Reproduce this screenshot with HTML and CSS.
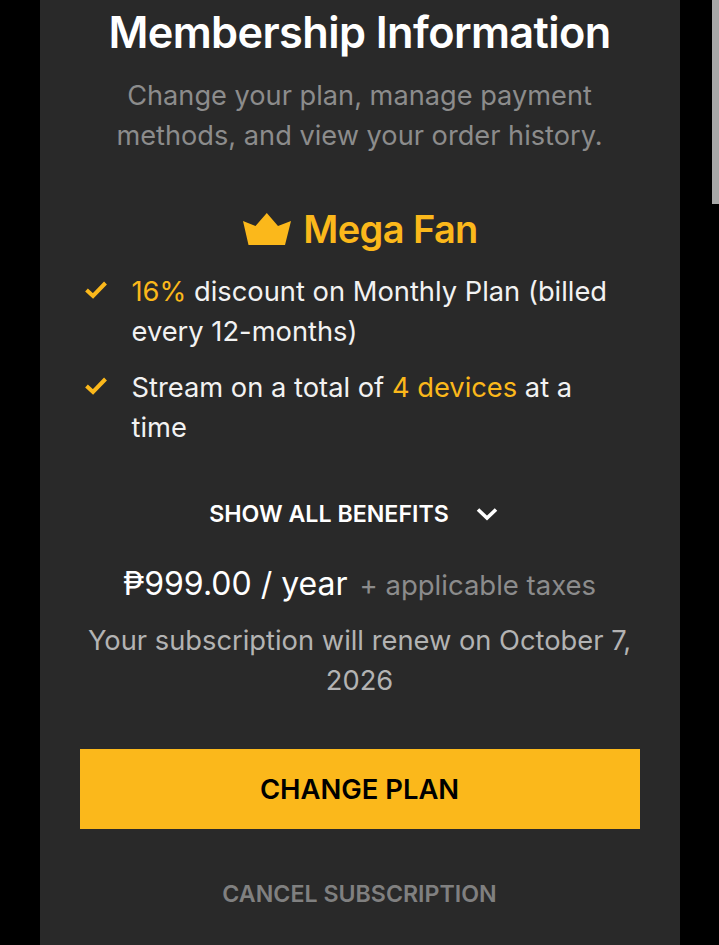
FILE: index.html
```html
<!DOCTYPE html>
<html lang="en">
<head>
  <meta charset="UTF-8">
  <meta name="viewport" content="width=device-width, initial-scale=1.0">
  <title>Membership Information</title>
  <link rel="stylesheet" href="styles.css">
</head>
<body>

  <div class="scroll-thumb"></div>

  <div class="container">
    <h1>Membership Information</h1>
    <p class="intro">Change your plan, manage payment methods, and view your order history.</p>

    <!-- Plan name -->
    <div class="plan-name">
      <svg class="crown" viewBox="0 0 48 32" aria-hidden="true">
        <path d="M23.800 0 L35 13 L48 8 L42 32 L5.500 32 L0 8 L12.500 13 Z" fill="#fbb81b"/>
      </svg>
      <span>Mega Fan</span>
    </div>

    <!-- Benefits -->
    <ul class="benefits">
      <li>
        <svg class="check" viewBox="0 0 22 18" aria-hidden="true"><path d="M1.500 9 L8 15 L20.500 2" fill="none" stroke="#fbb81b" stroke-width="4"/></svg>
        <span><em>16%</em> discount on Monthly Plan (billed every 12-months)</span>
      </li>
      <li>
        <svg class="check" viewBox="0 0 22 18" aria-hidden="true"><path d="M1.500 9 L8 15 L20.500 2" fill="none" stroke="#fbb81b" stroke-width="4"/></svg>
        <span>Stream on a total of <em>4 devices</em> at a time</span>
      </li>
    </ul>

    <div class="show-all">
      <span>SHOW ALL BENEFITS</span>
      <svg class="chevron" viewBox="0 0 22 14" aria-hidden="true"><path d="M2 2.500 L11 11 L20 2.500" fill="none" stroke="#fff" stroke-width="3.600"/></svg>
    </div>

    <!-- Price -->
    <div class="price">
      <span class="amount">₱999.00 / year</span>
      <span class="taxes">+ applicable taxes</span>
    </div>
    <p class="renew">Your subscription will renew on October 7, 2026</p>

    <button type="button" class="btn">CHANGE PLAN</button>
    <div class="cancel">CANCEL SUBSCRIPTION</div>
  </div>

</body>
</html>
```

FILE: styles.css
```css
/* General Styles */
html, body {
  height: 100%;
  overflow: hidden;
}

body {
  font-family: "Inter", "Open Sans", sans-serif;
  background-color: #000;
  color: #fff;
  margin: 0;
}

/* Overlay scrollbar */
.scroll-thumb {
  position: absolute;
  top: 0;
  right: 0;
  width: 7px;
  height: 204px;
  background-color: #a8a8a8;
}

/* Main Container */
.container {
  box-sizing: border-box;
  width: 640px;
  height: 945px;
  margin: 0 auto;
  padding: 8px 40px 0;
  background-color: #292929;
  text-align: center;
}

h1 {
  margin: 0;
  font-size: 43.300px;
  line-height: 48px;
  font-weight: 600;
  letter-spacing: -0.6px;
}

.intro {
  margin: 20px 0 0;
  padding: 0 30px;
  font-size: 27.200px;
  line-height: 40px;
  color: #8c8c8c;
}

/* Plan name */
.plan-name {
  display: flex;
  justify-content: center;
  align-items: center;
  gap: 12px;
  margin-top: 49px;
  padding-left: 2px;
  height: 48px;
  color: #fbb81b;
  font-size: 38px;
  font-weight: 600;
  letter-spacing: -0.6px;
}

.crown {
  width: 48px;
  height: 32px;
}

/* Benefits */
.benefits {
  list-style: none;
  margin: 19px 0 0;
  padding: 0;
  text-align: left;
}

.benefits li {
  display: flex;
  margin-bottom: 16px;
  padding-right: 20px;
  font-size: 27.300px;
  line-height: 40px;
  color: #f2f2f2;
}

.benefits em {
  font-style: normal;
  color: #fbb81b;
}

.check {
  flex: none;
  width: 22px;
  height: 18px;
  margin: 9px 25px 0 5px;
}

/* Show all */
.show-all {
  display: flex;
  justify-content: center;
  align-items: center;
  gap: 27px;
  margin-top: 50px;
  padding-right: 12px;
  height: 32px;
  font-size: 23.200px;
  font-weight: 600;
}

.chevron {
  width: 22px;
  height: 14px;
}

/* Price */
.price {
  display: flex;
  justify-content: center;
  align-items: baseline;
  gap: 12px;
  margin-top: 34px;
  line-height: 40px;
}

.amount {
  font-size: 32px;
}

.taxes {
  font-size: 27.500px;
  color: #8c8c8c;
}

.renew {
  margin: 16px 0 0;
  font-size: 27.300px;
  line-height: 40px;
  color: #b3b3b3;
}

/* Button */
.btn {
  display: block;
  width: 100%;
  height: 80px;
  margin-top: 48px;
  border: none;
  background-color: #fbb81b;
  color: #000;
  font-family: inherit;
  font-size: 27.400px;
  font-weight: 600;
}

.cancel {
  margin-top: 49px;
  font-size: 23.200px;
  line-height: 32px;
  font-weight: 600;
  color: #808080;
}
```
